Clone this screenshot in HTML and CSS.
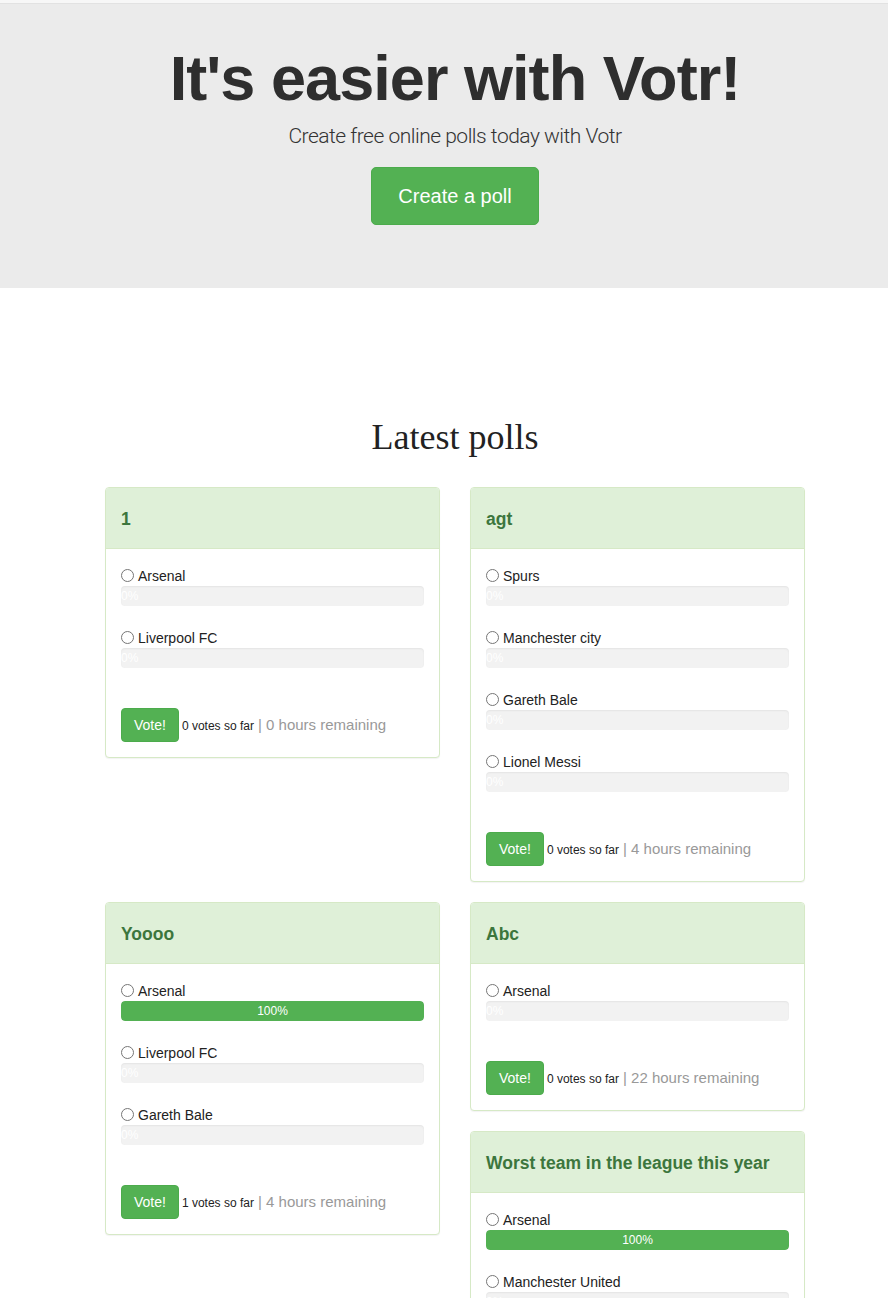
FILE: index.html
```html
<!DOCTYPE html>
<html>
<head>
<meta charset="utf-8">
<title>Votr</title>
<link rel="stylesheet" href="styles.css">
</head>
<body>
<div class="topbar"></div>
<header class="jumbotron">
  <h1>It's easier with Votr!</h1>
  <p class="lead">Create free online polls today with Votr</p>
  <a class="btn btn-lg" href="#">Create a poll</a>
</header>

<main class="container">
  <h2 class="section-title">Latest polls</h2>

  <div class="row">
    <div class="col">
      <div class="panel">
        <div class="panel-heading"><h3 class="panel-title">1</h3></div>
        <div class="panel-body">
          <div class="option"><label><input type="radio" name="p1"> Arsenal</label><div class="progress"><div class="progress-bar empty">0%</div></div></div>
          <div class="option"><label><input type="radio" name="p1"> Liverpool FC</label><div class="progress"><div class="progress-bar empty">0%</div></div></div>
          <div class="footer"><button class="btn">Vote!</button><small>0 votes so far</small><span class="meta">| 0 hours remaining</span></div>
        </div>
      </div>
    </div>
    <div class="col">
      <div class="panel">
        <div class="panel-heading"><h3 class="panel-title">agt</h3></div>
        <div class="panel-body">
          <div class="option"><label><input type="radio" name="p2"> Spurs</label><div class="progress"><div class="progress-bar empty">0%</div></div></div>
          <div class="option"><label><input type="radio" name="p2"> Manchester city</label><div class="progress"><div class="progress-bar empty">0%</div></div></div>
          <div class="option"><label><input type="radio" name="p2"> Gareth Bale</label><div class="progress"><div class="progress-bar empty">0%</div></div></div>
          <div class="option"><label><input type="radio" name="p2"> Lionel Messi</label><div class="progress"><div class="progress-bar empty">0%</div></div></div>
          <div class="footer"><button class="btn">Vote!</button><small>0 votes so far</small><span class="meta">| 4 hours remaining</span></div>
        </div>
      </div>
    </div>
  </div>

  <div class="row">
    <div class="col">
      <div class="panel">
        <div class="panel-heading"><h3 class="panel-title">Yoooo</h3></div>
        <div class="panel-body">
          <div class="option"><label><input type="radio" name="p3"> Arsenal</label><div class="progress"><div class="progress-bar full">100%</div></div></div>
          <div class="option"><label><input type="radio" name="p3"> Liverpool FC</label><div class="progress"><div class="progress-bar empty">0%</div></div></div>
          <div class="option"><label><input type="radio" name="p3"> Gareth Bale</label><div class="progress"><div class="progress-bar empty">0%</div></div></div>
          <div class="footer"><button class="btn">Vote!</button><small>1 votes so far</small><span class="meta">| 4 hours remaining</span></div>
        </div>
      </div>
    </div>
    <div class="col">
      <div class="panel">
        <div class="panel-heading"><h3 class="panel-title">Abc</h3></div>
        <div class="panel-body">
          <div class="option"><label><input type="radio" name="p4"> Arsenal</label><div class="progress"><div class="progress-bar empty">0%</div></div></div>
          <div class="footer"><button class="btn">Vote!</button><small>0 votes so far</small><span class="meta">| 22 hours remaining</span></div>
        </div>
      </div>
      <div class="panel">
        <div class="panel-heading"><h3 class="panel-title">Worst team in the league this year</h3></div>
        <div class="panel-body">
          <div class="option"><label><input type="radio" name="p5"> Arsenal</label><div class="progress"><div class="progress-bar full">100%</div></div></div>
          <div class="option"><label><input type="radio" name="p5"> Manchester United</label><div class="progress"><div class="progress-bar empty">0%</div></div></div>
          <div class="option"><label><input type="radio" name="p5"> Chelsea</label><div class="progress"><div class="progress-bar empty">0%</div></div></div>
          <div class="footer"><button class="btn">Vote!</button><small>1 votes so far</small><span class="meta">| 12 hours remaining</span></div>
        </div>
      </div>
    </div>
  </div>
</main>
</body>
</html>
```
FILE: styles.css
```css
* { box-sizing: border-box; }
html, body { margin: 0; padding: 0; }
body {
  font-family: "Liberation Sans", Arial, sans-serif;
  font-size: 14px;
  line-height: 1.42857;
  color: #333;
  background: #fff;
}
.topbar {
  height: 4px;
  background: #f7f7f7;
  border-bottom: 1px solid #e2e2e2;
}
.jumbotron {
  background: #ebebeb;
  text-align: center;
  padding: 40px 0 63px;
}
.jumbotron h1 {
  margin: 0 0 8px;
  font-size: 63px;
  line-height: 69px;
  font-weight: 700;
  letter-spacing: -0.95px;
  color: #2e2e2e;
  padding-left: 22px;
}
.jumbotron .lead {
  margin: 0 0 16px;
  font-family: Roboto, "Liberation Sans", sans-serif;
  font-size: 21px;
  line-height: 30px;
  font-weight: 300;
  letter-spacing: -0.5px;
  color: #333;
  padding-left: 22px;
}
.btn {
  display: inline-block;
  background: #53b153;
  color: #fff;
  border: 1px solid #4cab4c;
  border-radius: 4px;
  text-decoration: none;
  font-family: inherit;
  font-size: 14px;
  line-height: 20px;
  padding: 6px 12px;
  cursor: pointer;
}
.btn-lg {
  font-size: 20px;
  line-height: 28px;
  padding: 14px 26px;
  border-radius: 5px;
  margin-left: 22px;
}
.container {
  padding: 0 83px 0 105px;
}
.section-title {
  font-family: "Liberation Serif", "Times New Roman", serif;
  font-weight: 400;
  font-size: 36px;
  line-height: 40px;
  text-align: center;
  margin: 129px 0 30px;
  color: #222;
}
.row {
  display: grid;
  grid-template-columns: 335px 335px;
  column-gap: 30px;
  align-items: start;
}
.panel {
  border: 1px solid #d6e9c6;
  border-radius: 4px;
  background: #fff;
  box-shadow: 0 1px 1px rgba(0,0,0,.05);
  margin-bottom: 20px;
  overflow: hidden;
}
.panel-heading {
  background: #dff0d8;
  border-bottom: 1px solid #d6e9c6;
  height: 61px;
  padding: 2px 15px 0;
  display: flex;
  align-items: center;
}
.panel-title {
  margin: 0;
  font-size: 17.5px;
  font-weight: 700;
  color: #3c763d;
}
.panel-body {
  padding: 15px;
}
.option {
  margin-bottom: 20px;
}
.option label {
  display: flex;
  align-items: center;
  height: 22px;
  padding-top: 3px;
  font-size: 14px;
  color: #222;
}
.option input {
  margin: -2px 4px 0 0;
  width: 13px;
  height: 13px;
}
.progress {
  height: 20px;
  background: #f2f2f2;
  border-radius: 4px;
  box-shadow: inset 0 1px 2px rgba(0,0,0,.06);
  overflow: hidden;
}
.progress-bar {
  height: 20px;
  line-height: 20px;
  font-size: 12px;
  color: #fff;
  white-space: nowrap;
}
.progress-bar.empty { width: 0; overflow: visible; }
.progress-bar.full {
  width: 100%;
  background: #53b153;
  text-align: center;
  border-radius: 4px;
}
.footer {
  margin-top: 40px;
  display: flex;
  align-items: baseline;
}
.footer small {
  font-size: 12px;
  color: #222;
  margin-left: 3px;
}
.footer .meta {
  font-size: 15px;
  color: #999;
  margin-left: 4px;
}
```
